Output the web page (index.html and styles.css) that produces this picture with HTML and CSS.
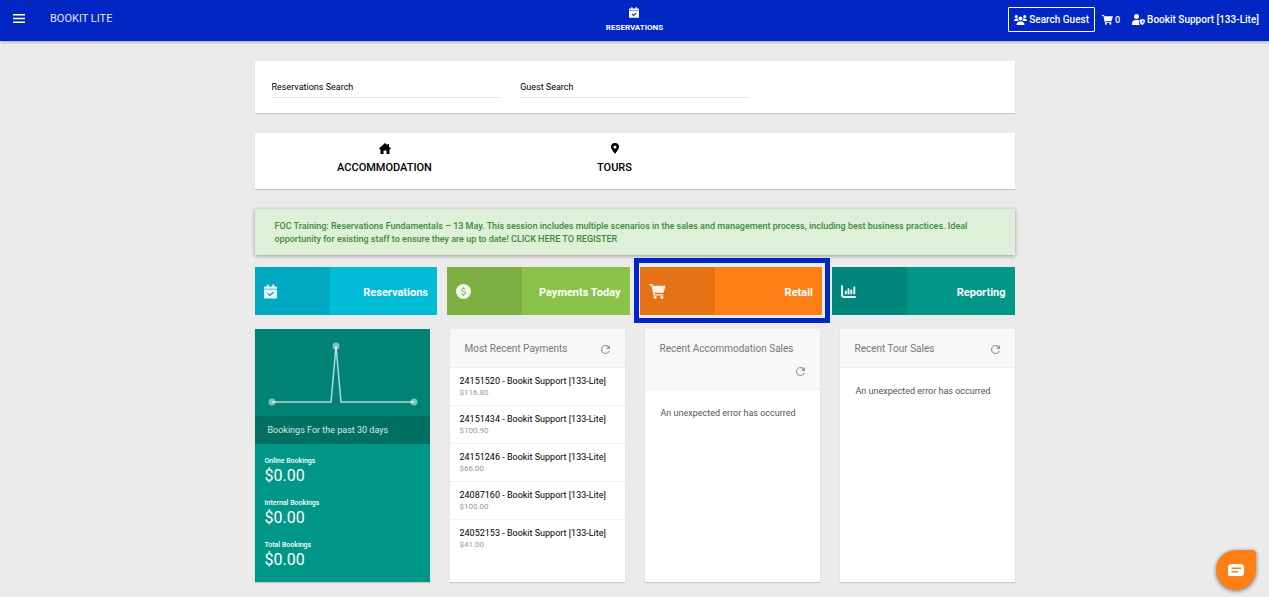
FILE: index.html
```html
<!DOCTYPE html>
<html lang="en">

<head>
    <meta charset="UTF-8">
    <meta name="viewport" content="width=device-width, initial-scale=1.0">
    <title>Bookit Lite</title>
    <link rel="stylesheet" href="styles.css">
</head>

<body>
    <!-- shared icons -->
    <svg class="sprite" aria-hidden="true">
        <symbol id="calendar" viewBox="0 0 14 15">
            <path fill-rule="evenodd" d="M3 0h2v2h4V0h2v2h2a1 1 0 0 1 1 1v1.500H0V3a1 1 0 0 1 1-1h2zM0 5.500h14V14a1 1 0 0 1-1 1H1a1 1 0 0 1-1-1zM4.500 9l-1 1 2.700 2.600L10.700 8.800l-1-1-3.500 2.900z" />
            <path opacity=".6" d="M0 4.500h14v1H0z" />
        </symbol>
        <symbol id="cart" viewBox="0 0 24 22">
            <path d="M0 0h4.500l.6 2.500H24L21 13H7.600l.4 2h12.500v2H6.200L3 2H0z" />
            <circle cx="8.500" cy="19.500" r="2.200" />
            <circle cx="18.500" cy="19.500" r="2.200" />
        </symbol>
        <symbol id="refresh" viewBox="0 0 16 16">
            <path d="M13.650 2.350A8 8 0 1 0 15.730 10h-2.080A6 6 0 1 1 8 2c1.660 0 3.140.69 4.220 1.780L9 7h7V0z" />
        </symbol>
    </svg>

    <header class="topbar">
        <div class="topbar-left">
            <button class="menu-btn" type="button" aria-label="Menu">
                <svg width="12" height="9" viewBox="0 0 12 9"><path d="M0 0h12v1.500H0zM0 3.700h12v1.500H0zM0 7.400h12v1.500H0z" /></svg>
            </button>
            <a class="brand" href="#">BOOKIT LITE</a>
        </div>
        <nav>
            <a class="nav-item" href="#">
                <svg width="10" height="11"><use href="#calendar" /></svg>
                RESERVATIONS
            </a>
        </nav>
        <div class="topbar-right">
            <button class="guest-btn" type="button">
                <svg width="13" height="10" viewBox="0 0 26 20">
                    <circle cx="4.500" cy="3" r="3" />
                    <circle cx="21.500" cy="3" r="3" />
                    <circle cx="13" cy="7" r="4" />
                    <path d="M0 12c0-3 2-5 5-5h2.500c0 2 .7 3.700 2 5zM26 12c0-3-2-5-5-5h-2.500c0 2-.7 3.700-2 5zM5 20c0-4 2.500-7 6-7h4c3.500 0 6 3 6 7z" />
                </svg>
                Search Guest
            </button>
            <a class="cart-link" href="#">
                <svg width="11" height="10"><use href="#cart" /></svg>
                0
            </a>
            <a class="user-link" href="#">
                <svg width="13" height="11" viewBox="0 0 26 22">
                    <circle cx="9" cy="5" r="5" />
                    <path d="M0 22v-3c0-4 3-7 7-7h4c1.500 0 2.500.3 3.500 1-1.500 3-1 6.500 1.500 9z" />
                    <path fill-rule="evenodd" d="M20.500 10l5.500 2c0 5-1.500 8.500-5.500 10-4-1.500-5.500-5-5.500-10zM20.500 13v6c1.500-1 2.300-2.500 2.500-5z" />
                </svg>
                Bookit Support [133-Lite]
            </a>
        </div>
    </header>

    <main class="container">
        <form class="card search">
            <input class="search-input" type="text" placeholder="Reservations Search" aria-label="Reservations Search">
            <input class="search-input" type="text" placeholder="Guest Search" aria-label="Guest Search">
        </form>

        <div class="card products">
            <a class="product" href="#">
                <svg width="12" height="11" viewBox="0 0 24 22"><path d="M12 0l5 4.500V2h3v5.300l4 3.700-1.500 1.500H21V22h-6v-7H9v7H3v-9.500H1.500L0 11z" /></svg>
                ACCOMMODATION
            </a>
            <a class="product" href="#">
                <svg width="8" height="11" viewBox="0 0 16 22"><path fill-rule="evenodd" d="M8 0a8 8 0 0 1 8 8c0 5-5 9.500-8 14C5 17.500 0 13 0 8a8 8 0 0 1 8-8zM8 5a3 3 0 1 0 0 6 3 3 0 0 0 0-6z" /></svg>
                TOURS
            </a>
        </div>

        <a class="notice" href="#">
            FOC Training: Reservations Fundamentals – 13 May. This session includes multiple scenarios in the sales and management process, including best business practices. Ideal opportunity for existing staff to ensure they are up to date! CLICK HERE TO REGISTER
        </a>

        <div class="tiles">
            <a class="tile cyan" href="#">
                <span class="tile-icon"><svg width="13" height="15"><use href="#calendar" /></svg></span>
                <span class="tile-label">Reservations</span>
            </a>
            <a class="tile green" href="#">
                <span class="tile-icon">
                    <svg width="15" height="15" viewBox="0 0 30 30">
                        <circle cx="15" cy="15" r="15" />
                        <path class="coin-mark" d="M19 11.500c-.6-1.500-2-2.300-4-2.300-2.300 0-4 1-4 2.800 0 4 8.200 2 8.200 6 0 1.800-1.700 3-4.200 3-2.300 0-3.900-1-4.400-2.600M15 6.500v3M15 21v3" />
                    </svg>
                </span>
                <span class="tile-label">Payments Today</span>
            </a>
            <a class="tile orange selected" href="#">
                <span class="tile-icon"><svg width="17" height="15"><use href="#cart" /></svg></span>
                <span class="tile-label">Retail</span>
            </a>
            <a class="tile teal" href="#">
                <span class="tile-icon">
                    <svg width="15" height="13" viewBox="0 0 30 26">
                        <path class="bars" d="M2 2V20c0 3 1 4 4 4h22M9.500 13v4M15 8.500v8.500M20.500 11v6M26.500 5v12" />
                    </svg>
                </span>
                <span class="tile-label">Reporting</span>
            </a>
        </div>

        <div class="widgets">
            <section class="widget bookings">
                <div class="chart">
                    <svg width="175" height="87" viewBox="0 0 175 87">
                        <path d="M17 73h59l5-56 5 56h73" />
                        <circle cx="17" cy="73" r="3.500" />
                        <circle cx="81" cy="17" r="3.500" />
                        <circle cx="159" cy="73" r="3.500" />
                    </svg>
                </div>
                <h2 class="chart-title">Bookings For the past 30 days</h2>
                <dl class="stats">
                    <dt>Online Bookings</dt>
                    <dd>$0.00</dd>
                    <dt>Internal Bookings</dt>
                    <dd>$0.00</dd>
                    <dt>Total Bookings</dt>
                    <dd>$0.00</dd>
                </dl>
            </section>

            <section class="widget">
                <div class="widget-head">
                    <h2>Most Recent Payments</h2>
                    <button class="refresh" type="button" aria-label="Refresh"><svg width="9" height="9"><use href="#refresh" /></svg></button>
                </div>
                <ul class="payments">
                    <li><a href="#">24151520 - Bookit Support [133-Lite]</a><small>$116.80</small></li>
                    <li><a href="#">24151434 - Bookit Support [133-Lite]</a><small>$100.90</small></li>
                    <li><a href="#">24151246 - Bookit Support [133-Lite]</a><small>$66.00</small></li>
                    <li><a href="#">24087160 - Bookit Support [133-Lite]</a><small>$100.00</small></li>
                    <li><a href="#">24052153 - Bookit Support [133-Lite]</a><small>$41.00</small></li>
                </ul>
            </section>

            <section class="widget">
                <div class="widget-head">
                    <h2>Recent Accommodation Sales</h2>
                    <button class="refresh" type="button" aria-label="Refresh"><svg width="9" height="9"><use href="#refresh" /></svg></button>
                </div>
                <p class="error">An unexpected error has occurred</p>
            </section>

            <section class="widget">
                <div class="widget-head">
                    <h2>Recent Tour Sales</h2>
                    <button class="refresh" type="button" aria-label="Refresh"><svg width="9" height="9"><use href="#refresh" /></svg></button>
                </div>
                <p class="error">An unexpected error has occurred</p>
            </section>
        </div>
    </main>

    <button class="chat" type="button" aria-label="Chat">
        <svg width="16" height="12" viewBox="0 0 32 24">
            <path fill-rule="evenodd" d="M7 0h18a7 7 0 0 1 7 7v10a7 7 0 0 1-7 7H2a2 2 0 0 1-2-2V7a7 7 0 0 1 7-7zM7 7v3h19V7zM7 14v3h13v-3z" />
        </svg>
    </button>
</body>

</html>
```
FILE: styles.css
```css
* {
    margin: 0;
    padding: 0;
    box-sizing: border-box;
}

body {
    min-height: 100vh;
    background: #ebebeb;
    font-family: Roboto, "Liberation Sans", sans-serif;
    font-size: 9px;
    color: #000;
}

a {
    color: inherit;
    text-decoration: none;
}

button {
    border: 0;
    background: none;
    font: inherit;
    color: inherit;
    cursor: pointer;
}

svg {
    display: block;
    flex: none;
    fill: currentColor;
}

h2 {
    font-weight: 400;
}

.sprite {
    position: absolute;
    width: 0;
    height: 0;
}

/* top bar */
.topbar {
    display: grid;
    grid-template-columns: 1fr auto 1fr;
    align-items: center;
    height: 41px;
    padding: 0 10px;
    background: #0027c4;
    color: #fff;
    box-shadow: 0 1px 3px rgba(0, 0, 0, .3);
}

.topbar-left {
    display: flex;
    align-items: center;
    gap: 25px;
    padding: 0 0 4px 3px;
}

.brand {
    font-size: 11px;
    color: #e4e8fa;
}

.nav-item {
    display: flex;
    flex-direction: column;
    align-items: center;
    gap: 4px;
    font-size: 8px;
    font-weight: 700;
    line-height: 12px;
}

.topbar-right {
    display: flex;
    justify-content: flex-end;
    align-items: center;
    padding-bottom: 2px;
    font-size: 10px;
    font-weight: 500;
}

.guest-btn,
.cart-link,
.user-link {
    display: flex;
    align-items: center;
    gap: 2px;
}

.guest-btn {
    height: 25px;
    padding: 0 5px;
    border: 1px solid #fff;
    border-radius: 1px;
}

.cart-link {
    margin: 0 12px 0 7px;
    font-size: 9px;
}

/* page */
.container {
    max-width: 760px;
    margin: 0 auto;
    padding: 20px 0 14px;
}

.card {
    display: grid;
    grid-template-columns: repeat(3, 1fr);
    margin-bottom: 20px;
    background: #fff;
    box-shadow: 0 1px 1px rgba(0, 0, 0, .15);
}

.search {
    gap: 20px;
    padding: 16px 17px 15px;
}

.search-input {
    width: 100%;
    height: 21px;
    border: 0;
    border-bottom: 1px solid #e6e6e6;
    outline: 0;
    background: none;
    font: inherit;
}

.search-input::placeholder {
    color: #000;
    opacity: 1;
}

.products {
    padding: 10px 55px 13px 15px;
}

.product {
    display: flex;
    flex-direction: column;
    align-items: center;
    gap: 6px;
    font-size: 11px;
    font-weight: 500;
    line-height: 16px;
}

.notice {
    display: block;
    margin-bottom: 12px;
    padding: 11px 30px 9px 20px;
    background: #dff0d8;
    box-shadow: 0 1px 4px rgba(0, 0, 0, .35);
    color: #3c8a40;
    font-weight: 500;
    line-height: 13px;
}

/* shortcut tiles */
.tiles {
    display: grid;
    grid-template-columns: repeat(4, 1fr);
    gap: 10px;
    margin-bottom: 14px;
}

.tile {
    display: flex;
    align-items: center;
    height: 48px;
    color: #fff;
}

.tile-icon {
    display: flex;
    align-items: center;
    width: 75px;
    height: 100%;
    padding-left: 9px;
    background: rgba(0, 0, 0, .1);
}

.tile-icon svg {
    opacity: .9;
}

.tile-label {
    flex: 1;
    padding: 2px 9px 0 0;
    font-size: 11px;
    font-weight: 700;
    text-align: right;
}

.cyan {
    background: #00bcd7;
}

.green {
    background: #8bc34a;
}

.orange {
    background: #ff7f17;
}

.teal {
    background: #009688;
}

.coin-mark {
    fill: none;
    stroke: #7eb043;
    stroke-width: 2;
}

.bars {
    fill: none;
    stroke: #fff;
    stroke-width: 4;
    stroke-linecap: round;
}

.selected {
    position: relative;
}

.selected::after {
    content: "";
    position: absolute;
    inset: -9px -8px -8px -6px;
    border: 5px solid #0027c4;
}

/* widgets */
.widgets {
    display: grid;
    grid-template-columns: repeat(4, 1fr);
    gap: 20px;
}

.widget {
    background: #fff;
    box-shadow: 0 1px 1px rgba(0, 0, 0, .15);
}

.bookings {
    background: #009688;
    color: #fff;
}

.chart {
    background: #008375;
}

.chart path {
    fill: none;
    stroke: rgba(255, 255, 255, .7);
    stroke-width: 1.500;
}

.chart circle {
    fill: rgba(255, 255, 255, .5);
}

.chart-title {
    padding: 0 13px;
    background: #007063;
    color: #d9eae8;
    font-size: 9px;
    line-height: 28px;
}

.stats {
    padding: 12px 10px 0;
}

.stats dt {
    font-size: 7px;
    font-weight: 500;
    line-height: 10px;
}

.stats dd {
    margin-bottom: 12px;
    font-size: 16px;
    line-height: 20px;
}

.widget-head {
    display: flex;
    flex-wrap: wrap;
    align-items: center;
    padding: 9px 15px 7px;
    border-bottom: 1px solid #efefef;
    background: #f8f8f8;
    color: #777;
}

.widget-head h2 {
    font-size: 10px;
    line-height: 22px;
}

.refresh {
    display: flex;
    align-items: center;
    height: 22px;
    margin-left: auto;
    padding-left: 10px;
    color: #999;
}

.payments {
    list-style: none;
}

.payments li {
    height: 38px;
    padding: 7px 10px 0;
    border-bottom: 1px solid #f0f0f0;
    line-height: 12px;
}

.payments li:last-child {
    border-bottom: 0;
}

.payments a,
.payments small {
    display: block;
}

.payments small {
    font-size: 8px;
    color: #999;
}

.error {
    padding: 17px 16px;
    color: #555;
    line-height: 12px;
}

.chat {
    position: fixed;
    right: 13px;
    bottom: 7px;
    display: flex;
    justify-content: center;
    align-items: center;
    width: 40px;
    height: 40px;
    border-radius: 20px 4px 20px 20px;
    background: #ff7f17;
    box-shadow: 0 1px 4px rgba(0, 0, 0, .5);
    color: #fff;
}
```
